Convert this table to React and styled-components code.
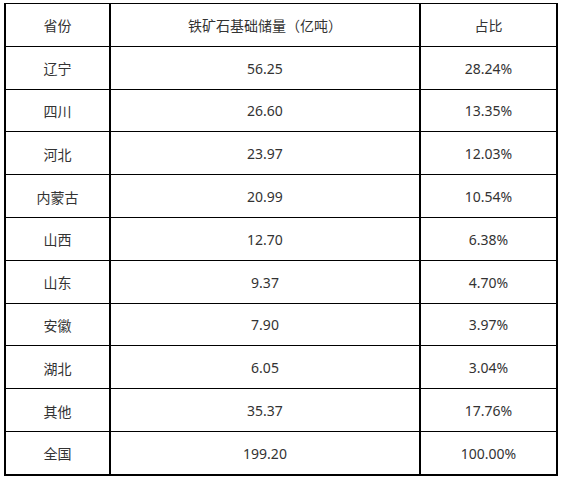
import styled, { createGlobalStyle } from 'styled-components';

const rows = [
  ['辽宁', '56.25', '28.24%'],
  ['四川', '26.60', '13.35%'],
  ['河北', '23.97', '12.03%'],
  ['内蒙古', '20.99', '10.54%'],
  ['山西', '12.70', '6.38%'],
  ['山东', '9.37', '4.70%'],
  ['安徽', '7.90', '3.97%'],
  ['湖北', '6.05', '3.04%'],
  ['其他', '35.37', '17.76%'],
  ['全国', '199.20', '100.00%'],
];

const GlobalStyle = createGlobalStyle`
  body {
    margin: 0;
    background: #fff;
    font-family: "Noto Sans", "Noto Sans CJK SC", sans-serif;
  }
`;

const Page = styled.div`
  padding: 3px 0 0 4px;
`;

const Grid = styled.div`
  display: grid;
  grid-template-columns: 103px 308px 135px;
  grid-auto-rows: 41.8px;
  column-gap: 2px;
  row-gap: 1px;
  padding: 1px 2px 2px 2px;
  width: max-content;
  background: #000;
`;

const Cell = styled.div`
  background: #fff;
  display: flex;
  align-items: center;
  justify-content: center;
  padding-top: 1px;
  font-size: 14px;
  color: #333;
`;

const App = () => (
  <>
    <GlobalStyle />
    <Page>
      <Grid>
        <Cell>省份</Cell>
        <Cell>铁矿石基础储量（亿吨）</Cell>
        <Cell>占比</Cell>
        {rows.map(([name, amount, share]) => (
          <>
            <Cell key={name + 'a'}>{name}</Cell>
            <Cell key={name + 'b'}>{amount}</Cell>
            <Cell key={name + 'c'}>{share}</Cell>
          </>
        ))}
      </Grid>
    </Page>
  </>
);

export default App;
